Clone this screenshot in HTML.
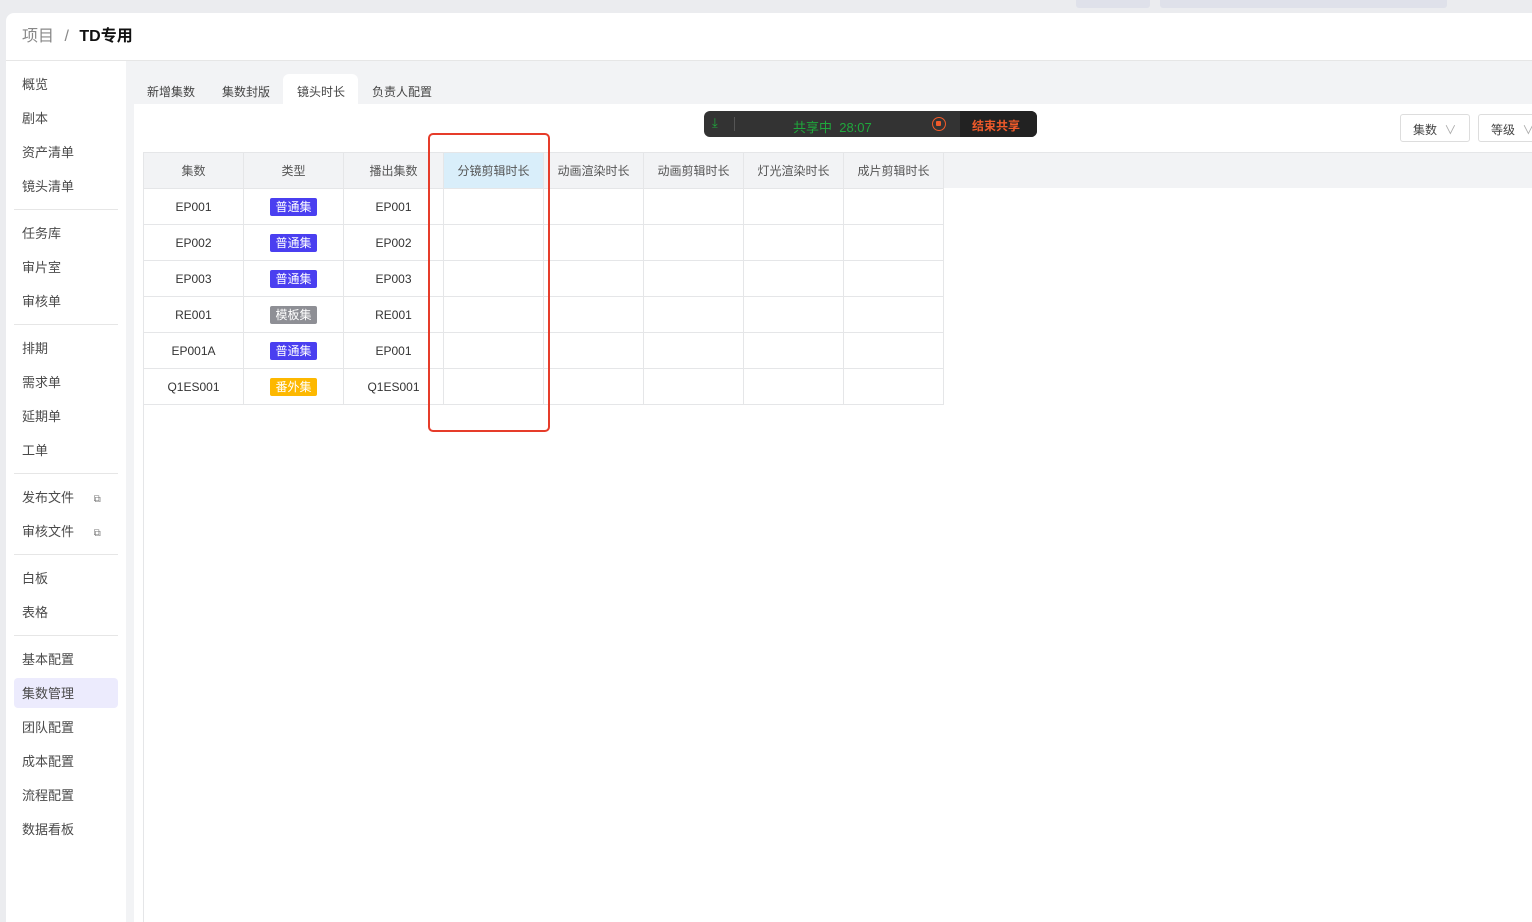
<!DOCTYPE html>
<html><head><meta charset="utf-8"><style>
*{margin:0;padding:0;box-sizing:border-box}
body{width:1532px;height:922px;background:#ebecef;font-family:"Liberation Sans","Noto Sans CJK SC",sans-serif;position:relative;overflow:hidden;color:#333}
.a{position:absolute}
.side div.i{position:absolute;left:22px;font-size:13px;color:#4a4a4a;line-height:16px}
.hr{position:absolute;left:14px;width:104px;height:1px;background:#e6e6e6}
.tab{position:absolute;top:83px;font-size:12px;color:#444}
table{border-collapse:collapse;position:absolute;left:143px;top:152px;font-size:12px;table-layout:fixed}
td,th{width:100px;height:36px;border:1px solid #e5e6e8;text-align:center;font-weight:normal;color:#333;padding:0}
th{background:#f2f3f5;color:#555}
.tg{display:inline-block;color:#fff;font-size:12px;padding:0 5px;line-height:18px;border-radius:2px}
</style></head><body>
<div class="a" style="left:1076px;top:-6px;width:74px;height:14px;background:#dfe1ea;border-radius:3px"></div>
<div class="a" style="left:1160px;top:-6px;width:287px;height:14px;background:#dfe1ea;border-radius:3px"></div>
<div class="a" style="left:6px;top:13px;width:1526px;height:909px;background:#fff;border-radius:8px 0 0 0"></div>
<div class="a" style="left:22px;top:27px;font-size:16px;color:#888;line-height:20px">项目 <span style="margin:0 6px">/</span> <b style="color:#111">TD专用</b></div>
<div class="a" style="left:6px;top:60px;width:1526px;height:1px;background:#e6e6e6"></div>
<div class="a" style="left:126px;top:61px;width:1406px;height:861px;background:#f2f3f5"></div>
<div class="a" style="left:283px;top:74px;width:75px;height:31px;background:#fff;border-radius:6px 6px 0 0"></div>
<div class="tab" style="left:147px">新增集数</div>
<div class="tab" style="left:222px">集数封版</div>
<div class="tab" style="left:297px">镜头时长</div>
<div class="tab" style="left:372px">负责人配置</div>
<div class="a" style="left:134px;top:104px;width:1398px;height:818px;background:#fff"></div>
<div class="a" style="left:143px;top:152px;width:1389px;height:36px;background:#f2f3f5;border-top:1px solid #e5e6e8"></div>
<div class="a" style="left:143px;top:188px;width:1px;height:734px;background:#e5e6e8"></div>
<div class="a" style="left:1400px;top:114px;width:70px;height:28px;border:1px solid #ddd;border-radius:3px;font-size:12px;color:#444;padding:6px 12px">集数 <span style="color:#aaa;margin-left:4px">∨</span></div>
<div class="a" style="left:1478px;top:114px;width:70px;height:28px;border:1px solid #ddd;border-radius:3px;font-size:12px;color:#444;padding:6px 12px">等级 <span style="color:#aaa;margin-left:4px">∨</span></div>
<table style="width:800px">
<tr><th>集数</th><th>类型</th><th>播出集数</th><th style="background:#d9eefa">分镜剪辑时长</th><th>动画渲染时长</th><th>动画剪辑时长</th><th>灯光渲染时长</th><th>成片剪辑时长</th></tr>
<tr><td>EP001</td><td><span class="tg" style="background:#4a3ff0">普通集</span></td><td>EP001</td><td></td><td></td><td></td><td></td><td></td></tr>
<tr><td>EP002</td><td><span class="tg" style="background:#4a3ff0">普通集</span></td><td>EP002</td><td></td><td></td><td></td><td></td><td></td></tr>
<tr><td>EP003</td><td><span class="tg" style="background:#4a3ff0">普通集</span></td><td>EP003</td><td></td><td></td><td></td><td></td><td></td></tr>
<tr><td>RE001</td><td><span class="tg" style="background:#8e8f95">模板集</span></td><td>RE001</td><td></td><td></td><td></td><td></td><td></td></tr>
<tr><td>EP001A</td><td><span class="tg" style="background:#4a3ff0">普通集</span></td><td>EP001</td><td></td><td></td><td></td><td></td><td></td></tr>
<tr><td>Q1ES001</td><td><span class="tg" style="background:#fdb800">番外集</span></td><td>Q1ES001</td><td></td><td></td><td></td><td></td><td></td></tr>
</table>
<div class="a" style="left:428px;top:133px;width:122px;height:299px;border:2px solid #e63c2a;border-radius:5px"></div>
<div class="a" style="left:704px;top:111px;width:333px;height:26px;background:#333;border-radius:6px;overflow:hidden">
<div class="a" style="left:8px;top:4px;color:#1fa83c;font-size:13px">⤓</div>
<div class="a" style="left:30px;top:6px;width:1px;height:14px;background:#555"></div>
<div class="a" style="left:89px;top:6px;color:#1fa83c;font-size:13px">共享中&nbsp; 28:07</div>
<div class="a" style="left:228px;top:6px;width:14px;height:14px;border:1.5px solid #f05a2a;border-radius:50%"><div class="a" style="left:3px;top:3px;width:5px;height:5px;background:#f05a2a;border-radius:1px"></div></div>
<div class="a" style="left:256px;top:0;width:77px;height:26px;background:#222;color:#f05a2a;font-size:12px;font-weight:bold;padding:6px 12px">结束共享</div>
</div>
<div class="side">
<div class="i" style="top:77px">概览</div><div class="i" style="top:111px">剧本</div><div class="i" style="top:145px">资产清单</div><div class="i" style="top:179px">镜头清单</div>
<div class="hr" style="top:209px"></div>
<div class="i" style="top:226px">任务库</div><div class="i" style="top:260px">审片室</div><div class="i" style="top:294px">审核单</div>
<div class="hr" style="top:324px"></div>
<div class="i" style="top:341px">排期</div><div class="i" style="top:375px">需求单</div><div class="i" style="top:409px">延期单</div><div class="i" style="top:443px">工单</div>
<div class="hr" style="top:473px"></div>
<div class="i" style="top:490px">发布文件 <span style="font-size:10px;margin-left:16px;color:#777">⧉</span></div><div class="i" style="top:524px">审核文件 <span style="font-size:10px;margin-left:16px;color:#777">⧉</span></div>
<div class="hr" style="top:554px"></div>
<div class="i" style="top:571px">白板</div><div class="i" style="top:605px">表格</div>
<div class="hr" style="top:635px"></div>
<div class="i" style="top:652px">基本配置</div>
<div class="a" style="left:14px;top:678px;width:104px;height:30px;background:#ecebfd;border-radius:4px"></div>
<div class="i" style="top:686px">集数管理</div><div class="i" style="top:720px">团队配置</div><div class="i" style="top:754px">成本配置</div><div class="i" style="top:788px">流程配置</div><div class="i" style="top:822px">数据看板</div>
</div>
</body></html>
